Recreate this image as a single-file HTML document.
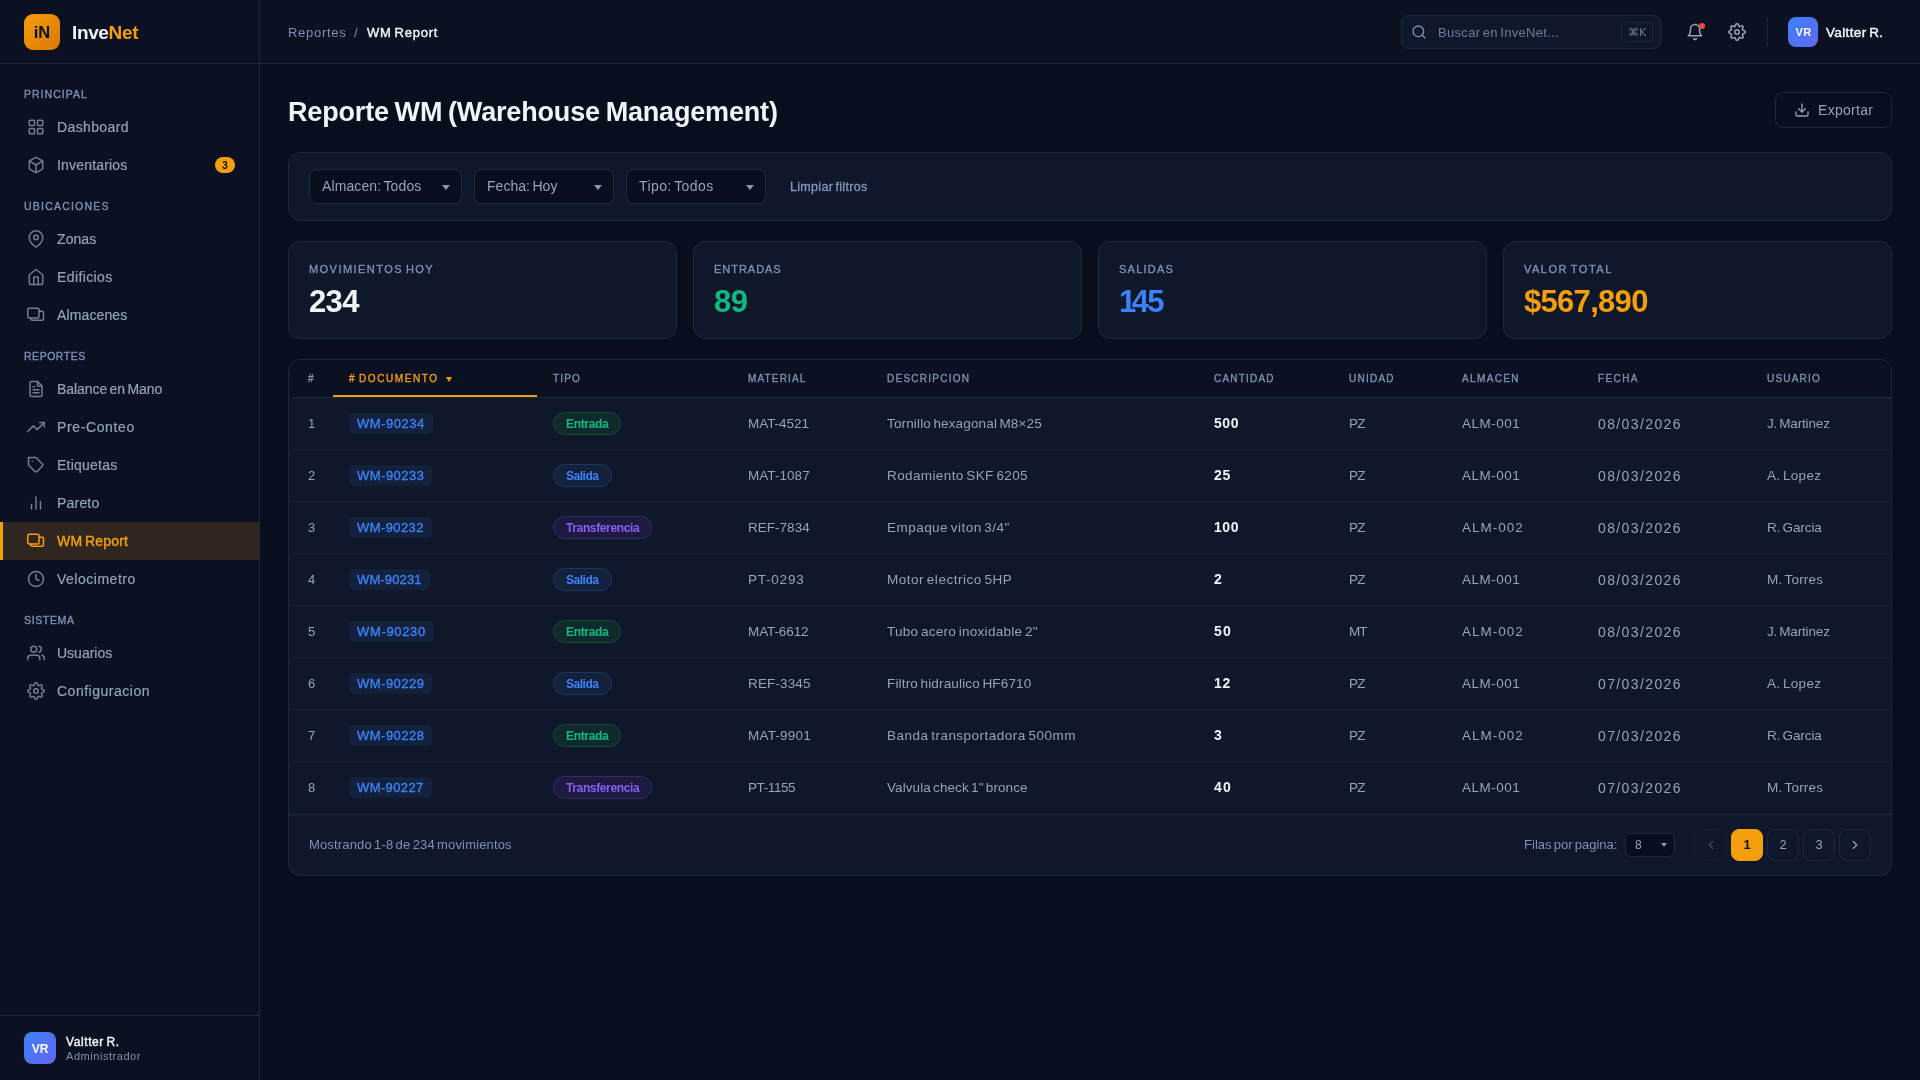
<!DOCTYPE html>
<html lang="es">
<head>
<meta charset="utf-8">
<title>InveNet - WM Report</title>
<style>
*{box-sizing:border-box;margin:0;padding:0}
html,body{width:1920px;height:1080px;overflow:hidden;background:#090e1e;color:#94a3b8;
  font-family:"Liberation Sans",sans-serif;font-size:14px}
svg{display:block}
.ico{fill:none;stroke:currentColor;stroke-width:2;stroke-linecap:round;stroke-linejoin:round}
.fit{white-space:nowrap;word-spacing:-1.5px}
.layer{position:absolute;left:0;top:0;width:1920px;height:1080px;will-change:transform}
.bg-side{position:absolute;left:0;top:0;width:260px;height:1080px;background:#0b1121}
.bg-top{position:absolute;left:260px;top:0;width:1660px;height:64px;background:#0b1121}

/* ---------- sidebar ---------- */
.sidebar{position:absolute;left:0;top:0;width:260px;height:1080px;border-right:1px solid #1e293b}
.brand{height:64px;border-bottom:1px solid #1e293b;position:relative}
.logo{position:absolute;left:24px;top:14px;width:36px;height:36px;border-radius:9px;
  background:linear-gradient(135deg,#f59e0b 0%,#d97706 100%);color:#0b1121;font-weight:700;font-size:16.5px;
  text-align:center;line-height:36px;letter-spacing:0}
.brand-name{position:absolute;left:72px;top:20px;font-size:19px;font-weight:700;color:#f1f5f9;line-height:25px}
.brand-name b{color:#f59e0b}
.nav{padding-top:16px}
.sec{height:28px;padding:8px 24px 0;font-size:10.5px;line-height:12px;font-weight:400;-webkit-text-stroke:.35px #7f8fb5;color:#7f8fb5;white-space:nowrap}
.sec.gap{margin-top:8px}
.item{height:38px;position:relative;color:#94a3b8;-webkit-text-stroke:.2px #94a3b8;font-size:14px;line-height:38px;padding-left:57px;white-space:nowrap}
.item svg{position:absolute;left:27px;top:10px;width:18px;height:18px;color:#6f7d98}
.item.active{background:#2f261f;color:#f59e0b;font-weight:400;-webkit-text-stroke:.4px #f59e0b;border-left:3px solid #f59e0b;padding-left:54px}
.item.active svg{left:24px;color:#f59e0b}
.badge{-webkit-text-stroke:0;position:absolute;left:215px;top:11px;width:20px;height:16px;border-radius:8px;background:#f59e0b;color:#0b1121;
  font-size:10px;font-weight:700;line-height:17.5px;text-align:center;letter-spacing:0}
.item.active .badge{left:212px}
.side-foot{position:absolute;left:0;bottom:0;width:259px;height:65px;border-top:1px solid #1e293b}
.avatar{background:linear-gradient(135deg,#3b82f6 0%,#6366f1 100%);color:#fff;font-weight:700;text-align:center}
.side-foot .avatar{position:absolute;left:24px;top:16px;width:32px;height:32px;border-radius:8px;font-size:12px;line-height:34px}
.side-foot .nm{position:absolute;left:66px;top:19px;font-size:12px;line-height:14px;font-weight:400;-webkit-text-stroke:.4px #f1f5f9;color:#f1f5f9;white-space:nowrap}
.side-foot .rl{position:absolute;left:66px;top:33px;font-size:11px;line-height:14px;color:#7f8fb5}

/* ---------- header ---------- */
.top{position:absolute;left:260px;top:0;width:1660px;height:64px;border-bottom:1px solid #1e293b}
.crumb{position:absolute;left:28px;top:23px;font-size:13px;line-height:20px;color:#7f8fb5;white-space:nowrap}
.crumb i{font-style:normal;position:absolute;left:66px;top:0}
.crumb b{position:absolute;left:79px;top:0;color:#f1f5f9;font-weight:400;-webkit-text-stroke:.4px #f1f5f9}
.search{position:absolute;left:1141px;top:15px;width:260px;height:34px;border:1px solid #1e293b;border-radius:8px;background:#0f172a}
.search svg{position:absolute;left:9px;top:8px;width:16px;height:16px;color:#7f8fb5}
.search .ph{position:absolute;left:36px;top:8px;font-size:13px;line-height:18px;color:#6b7a9d}
.search kbd{position:absolute;right:7px;top:6px;width:32px;height:20px;border:1px solid #1e293b;border-radius:4px;font-family:"DejaVu Sans","Liberation Sans",sans-serif;
  font-size:11px;line-height:19px;text-align:center;color:#6b7a9d}
.hicon{position:absolute;top:23px;width:18px;height:18px;color:#94a3b8}
.dot{position:absolute;left:1439px;top:23px;width:5.5px;height:5.5px;border-radius:50%;background:#ef4444}
.vdiv{position:absolute;left:1507px;top:18px;width:1px;height:28px;background:#1e293b}
.top .avatar{position:absolute;left:1528px;top:17px;width:30px;height:30px;border-radius:8px;font-size:11px;line-height:30px;padding-left:1px;letter-spacing:.3px}
.top .uname{position:absolute;left:1566px;top:23px;font-size:13.5px;line-height:20px;font-weight:400;-webkit-text-stroke:.45px #f1f5f9;color:#f1f5f9;white-space:nowrap}

/* ---------- main ---------- */
.main{position:absolute;left:260px;top:64px;width:1660px;height:1016px}
.title{position:absolute;left:28px;top:31px;font-size:27px;line-height:34px;font-weight:700;color:#f1f5f9;white-space:nowrap}
.export{position:absolute;left:1515px;top:28px;width:117px;height:36px;border:1px solid #1e293b;border-radius:8px;color:#94a3b8;font-size:14px;line-height:34px;padding-left:42px;white-space:nowrap}
.export svg{position:absolute;left:18px;top:9px;width:16px;height:16px;color:#94a3b8}
.card{position:absolute;background:#0f172a;border:1px solid #1e293b;border-radius:12px}
.filters{left:28px;top:88px;width:1604px;height:69px}
.sel{position:absolute;top:16px;height:35px;border:1px solid #1e293b;border-radius:8px;background:#090e1e;color:#94a3b8;font-size:14px;line-height:33px;padding-left:12px;white-space:nowrap}
.sel:after,.rsel:after{content:"";position:absolute;right:11px;top:14.5px;border-left:4px solid transparent;border-right:4px solid transparent;border-top:5.5px solid #8a99bb}
.clear{position:absolute;left:501px;top:26px;font-size:12.5px;line-height:16px;color:#8696be;-webkit-text-stroke:.3px #8696be;white-space:nowrap}
.stat{top:177px;width:389px;height:98px}
.stat .l{position:absolute;left:20px;top:21px;font-size:11px;line-height:12px;font-weight:400;-webkit-text-stroke:.35px #7f8fb5;color:#7f8fb5;white-space:nowrap}
.stat .v{position:absolute;left:20px;top:42px;font-size:31px;line-height:36px;font-weight:700;color:#f1f5f9;white-space:nowrap}
.tbl{left:28px;top:295px;width:1604px;height:517px;overflow:hidden}
.thead{position:absolute;left:0;top:0;width:1602px;height:38px;background:#0b1121}
.thead:after{content:"";position:absolute;left:3px;right:0;bottom:0;height:1px;background:#1e293b}
.th{position:absolute;top:13px;font-size:10px;line-height:12px;font-weight:400;-webkit-text-stroke:.35px #7f8fb5;color:#7f8fb5;white-space:nowrap}
.th.on{color:#f59e0b;-webkit-text-stroke-color:#f59e0b}
.thbar{position:absolute;left:44px;top:35px;z-index:2;width:204px;height:2px;background:#f59e0b}
.tri{position:absolute;left:157px;top:17px;border-left:3px solid transparent;border-right:3px solid transparent;border-top:5px solid #f59e0b}
.row{position:absolute;left:3px;width:1599px;height:52px;border-bottom:1px solid #172033;font-size:13.5px;line-height:20px;color:#94a3b8}
.row>*{position:absolute;top:16px;white-space:nowrap}
.c1{left:16px;font-size:13px}
.doc{left:57px;top:15px!important;height:21px;line-height:22px;padding:0 8px;border-radius:5px;background:#14213d;color:#3b82f6;font-size:13px;font-weight:400;-webkit-text-stroke:.35px #3b82f6}
.pill{left:261px;top:14px!important;height:23px;line-height:23px;padding:0 12px;border-radius:12px;font-size:12px;font-weight:700;border:1px solid}
.pill.e{color:#10b981;background:#0f2a2a;border-color:#14453f}
.pill.s{color:#3b82f6;background:#14213d;border-color:#1c3663}
.pill.t{color:#8b5cf6;background:#1c1b3f;border-color:#332a66}
.c4{left:456px}.c5{left:595px}.c6{left:922px;top:15px!important;color:#f1f5f9;font-weight:700;font-size:14px}.c7{left:1057px}.c8{left:1170px}.c9{left:1306px;top:15.5px!important;font-size:14px}.c10{left:1475px}
.tfoot{position:absolute;left:0;top:454px;width:1602px;height:61px;border-top:1px solid #1e293b}
.tfoot .info{position:absolute;left:20px;top:22px;font-size:13px;line-height:16px;color:#7f8fb5;white-space:nowrap}
.tfoot .rpp{position:absolute;left:1235px;top:22px;font-size:13px;line-height:16px;color:#7f8fb5;white-space:nowrap}
.rsel{position:absolute;left:1336px;top:18px;width:50px;height:24px;border:1px solid #1e293b;border-radius:6px;background:#090e1e;color:#94a3b8;font-size:12px;line-height:22px;padding-left:9px}
.rsel:after{right:7px;top:9px;border-left-width:3px;border-right-width:3px;border-top-width:4px}
.pg{position:absolute;top:14px;width:32px;height:32px;border:1px solid #1e293b;border-radius:8px;color:#94a3b8;font-size:13px;line-height:30px;text-align:center}
.pg.on{background:#f59e0b;border-color:#f59e0b;color:#0b1121;font-weight:700}
.pg.dis{opacity:.4}
.pg svg{position:absolute;left:8px;top:8px;width:14px;height:14px}
</style>
</head>
<body>
<div class="bgs"><div class="bg-side"></div><div class="bg-top"></div></div>
<div class="layer">
<aside class="sidebar">
  <div class="brand"><div class="logo">iN</div><div class="brand-name"><span class="fit" style="letter-spacing:-0.360px">Inve<b>Net</b></span></div></div>
  <nav class="nav">
    <div class="sec"><span class="fit" style="letter-spacing:1.012px">PRINCIPAL</span></div>
    <div class="item"><svg class="ico" viewBox="0 0 24 24"><rect x="3" y="3" width="7" height="7" rx="1"/><rect x="14" y="3" width="7" height="7" rx="1"/><rect x="14" y="14" width="7" height="7" rx="1"/><rect x="3" y="14" width="7" height="7" rx="1"/></svg><span class="fit" style="letter-spacing:0.375px">Dashboard</span></div>
    <div class="item"><svg class="ico" viewBox="0 0 24 24"><path d="M21 16V8a2 2 0 0 0-1-1.73l-7-4a2 2 0 0 0-2 0l-7 4A2 2 0 0 0 3 8v8a2 2 0 0 0 1 1.73l7 4a2 2 0 0 0 2 0l7-4A2 2 0 0 0 21 16z"/><path d="M3.27 6.96 12 12.01l8.73-5.05"/><path d="M12 22.08V12"/></svg><span class="fit" style="letter-spacing:0.176px">Inventarios</span><span class="badge">3</span></div>
    <div class="sec gap"><span class="fit" style="letter-spacing:1.215px">UBICACIONES</span></div>
    <div class="item"><svg class="ico" viewBox="0 0 24 24"><path d="M21 10c0 7-9 13-9 13s-9-6-9-13a9 9 0 0 1 18 0z"/><circle cx="12" cy="10" r="3"/></svg><span class="fit" style="letter-spacing:0.083px">Zonas</span></div>
    <div class="item"><svg class="ico" viewBox="0 0 24 24"><path d="M3 9l9-7 9 7v11a2 2 0 0 1-2 2H5a2 2 0 0 1-2-2z"/><path d="M9 22V12h6v10"/></svg><span class="fit" style="letter-spacing:0.389px">Edificios</span></div>
    <div class="item"><svg class="ico" viewBox="0 0 24 24"><rect x="1" y="3" width="15" height="13" rx="2"/><path d="M16 7h4a2 2 0 0 1 2 2v8a2 2 0 0 1-2 2H7a2 2 0 0 1-2-2l-1-1"/></svg><span class="fit" style="letter-spacing:0.123px">Almacenes</span></div>
    <div class="sec gap"><span class="fit" style="letter-spacing:0.525px">REPORTES</span></div>
    <div class="item"><svg class="ico" viewBox="0 0 24 24"><path d="M14 2H6a2 2 0 0 0-2 2v16a2 2 0 0 0 2 2h12a2 2 0 0 0 2-2V8z"/><path d="M14 2v6h6"/><path d="M16 13H8"/><path d="M16 17H8"/><path d="M10 9H8"/></svg><span class="fit" style="letter-spacing:-0.051px">Balance en Mano</span></div>
    <div class="item"><svg class="ico" viewBox="0 0 24 24"><path d="M23 6l-9.5 9.5-5-5L1 18"/><path d="M17 6h6v6"/></svg><span class="fit" style="letter-spacing:0.628px">Pre-Conteo</span></div>
    <div class="item"><svg class="ico" viewBox="0 0 24 24"><path d="M20.59 13.41l-7.17 7.17a2 2 0 0 1-2.83 0L2 12V2h10l8.59 8.59a2 2 0 0 1 0 2.82z"/><path d="M7 7h.01"/></svg><span class="fit" style="letter-spacing:0.234px">Etiquetas</span></div>
    <div class="item"><svg class="ico" viewBox="0 0 24 24"><path d="M18 20V10"/><path d="M12 20V4"/><path d="M6 20v-6"/></svg><span class="fit" style="letter-spacing:0.199px">Pareto</span></div>
    <div class="item active"><svg class="ico" viewBox="0 0 24 24"><rect x="1" y="3" width="15" height="13" rx="2"/><path d="M16 7h4a2 2 0 0 1 2 2v8a2 2 0 0 1-2 2H7a2 2 0 0 1-2-2l-1-1"/></svg><span class="fit" style="letter-spacing:0.213px">WM Report</span></div>
    <div class="item"><svg class="ico" viewBox="0 0 24 24"><circle cx="12" cy="12" r="10"/><path d="M12 6v6l4 2"/></svg><span class="fit" style="letter-spacing:0.509px">Velocimetro</span></div>
    <div class="sec gap"><span class="fit" style="letter-spacing:0.650px">SISTEMA</span></div>
    <div class="item"><svg class="ico" viewBox="0 0 24 24"><path d="M17 21v-2a4 4 0 0 0-4-4H5a4 4 0 0 0-4 4v2"/><circle cx="9" cy="7" r="4"/><path d="M23 21v-2a4 4 0 0 0-3-3.87"/><path d="M16 3.13a4 4 0 0 1 0 7.75"/></svg><span class="fit" style="letter-spacing:0.000px">Usuarios</span></div>
    <div class="item"><svg class="ico" viewBox="0 0 24 24"><circle cx="12" cy="12" r="3"/><path d="M19.4 15a1.65 1.65 0 0 0 .33 1.82l.06.06a2 2 0 0 1 0 2.83 2 2 0 0 1-2.83 0l-.06-.06a1.65 1.65 0 0 0-1.82-.33 1.65 1.65 0 0 0-1 1.51V21a2 2 0 0 1-2 2 2 2 0 0 1-2-2v-.09A1.65 1.65 0 0 0 9 19.4a1.65 1.65 0 0 0-1.82.33l-.06.06a2 2 0 0 1-2.83 0 2 2 0 0 1 0-2.83l.06-.06a1.65 1.65 0 0 0 .33-1.82 1.65 1.65 0 0 0-1.51-1H3a2 2 0 0 1-2-2 2 2 0 0 1 2-2h.09A1.65 1.65 0 0 0 4.6 9a1.65 1.65 0 0 0-.33-1.82l-.06-.06a2 2 0 0 1 0-2.83 2 2 0 0 1 2.83 0l.06.06a1.65 1.65 0 0 0 1.82.33H9a1.65 1.65 0 0 0 1-1.51V3a2 2 0 0 1 2-2 2 2 0 0 1 2 2v.09a1.65 1.65 0 0 0 1 1.51 1.65 1.65 0 0 0 1.82-.33l.06-.06a2 2 0 0 1 2.83 0 2 2 0 0 1 0 2.83l-.06.06a1.65 1.65 0 0 0-.33 1.82V9a1.65 1.65 0 0 0 1.51 1H21a2 2 0 0 1 2 2 2 2 0 0 1-2 2h-.09a1.65 1.65 0 0 0-1.51 1z"/></svg><span class="fit" style="letter-spacing:0.509px">Configuracion</span></div>
  </nav>
  <div class="side-foot"><div class="avatar">VR</div><div class="nm"><span class="fit" style="letter-spacing:0.596px">Valtter R.</span></div><div class="rl"><span class="fit" style="letter-spacing:0.545px">Administrador</span></div></div>
</aside>

<header class="top">
  <div class="crumb"><span class="fit" style="letter-spacing:0.714px">Reportes</span><i>/</i><b><span class="fit" style="letter-spacing:0.770px">WM Report</span></b></div>
  <div class="search"><svg class="ico" viewBox="0 0 24 24"><circle cx="11" cy="11" r="8"/><path d="M21 21l-4.35-4.35"/></svg><span class="ph"><span class="fit" style="letter-spacing:0.311px">Buscar en InveNet...</span></span><kbd>⌘K</kbd></div>
  <svg class="ico hicon" style="left:1426px" viewBox="0 0 24 24"><path d="M18 8A6 6 0 0 0 6 8c0 7-3 9-3 9h18s-3-2-3-9"/><path d="M13.73 21a2 2 0 0 1-3.46 0"/></svg>
  <div class="dot"></div>
  <svg class="ico hicon" style="left:1468px" viewBox="0 0 24 24"><circle cx="12" cy="12" r="3"/><path d="M19.4 15a1.65 1.65 0 0 0 .33 1.82l.06.06a2 2 0 0 1 0 2.83 2 2 0 0 1-2.83 0l-.06-.06a1.65 1.65 0 0 0-1.82-.33 1.65 1.65 0 0 0-1 1.51V21a2 2 0 0 1-2 2 2 2 0 0 1-2-2v-.09A1.65 1.65 0 0 0 9 19.4a1.65 1.65 0 0 0-1.82.33l-.06.06a2 2 0 0 1-2.83 0 2 2 0 0 1 0-2.83l.06-.06a1.65 1.65 0 0 0 .33-1.82 1.65 1.65 0 0 0-1.51-1H3a2 2 0 0 1-2-2 2 2 0 0 1 2-2h.09A1.65 1.65 0 0 0 4.6 9a1.65 1.65 0 0 0-.33-1.82l-.06-.06a2 2 0 0 1 0-2.83 2 2 0 0 1 2.83 0l.06.06a1.65 1.65 0 0 0 1.82.33H9a1.65 1.65 0 0 0 1-1.51V3a2 2 0 0 1 2-2 2 2 0 0 1 2 2v.09a1.65 1.65 0 0 0 1 1.51 1.65 1.65 0 0 0 1.82-.33l.06-.06a2 2 0 0 1 2.83 0 2 2 0 0 1 0 2.83l-.06.06a1.65 1.65 0 0 0-.33 1.82V9a1.65 1.65 0 0 0 1.51 1H21a2 2 0 0 1 2 2 2 2 0 0 1-2 2h-.09a1.65 1.65 0 0 0-1.51 1z"/></svg>
  <div class="vdiv"></div>
  <div class="avatar">VR</div><div class="uname"><span class="fit" style="letter-spacing:0.358px">Valtter R.</span></div>
</header>

<main class="main">
  <h1 class="title"><span class="fit" style="letter-spacing:-0.176px">Reporte WM (Warehouse Management)</span></h1>
  <div class="export"><svg class="ico" viewBox="0 0 24 24"><path d="M21 15v4a2 2 0 0 1-2 2H5a2 2 0 0 1-2-2v-4"/><path d="M7 10l5 5 5-5"/><path d="M12 15V3"/></svg><span class="fit" style="letter-spacing:0.297px">Exportar</span></div>

  <div class="card filters">
    <div class="sel" style="left:20px;width:153px"><span class="fit" style="letter-spacing:0.110px">Almacen: Todos</span></div>
    <div class="sel" style="left:185px;width:140px"><span class="fit" style="letter-spacing:0.034px">Fecha: Hoy</span></div>
    <div class="sel" style="left:337px;width:140px"><span class="fit" style="letter-spacing:0.409px">Tipo: Todos</span></div>
    <div class="clear"><span class="fit" style="letter-spacing:0.312px">Limpiar filtros</span></div>
  </div>

  <div class="card stat" style="left:28px"><div class="l"><span class="fit" style="letter-spacing:1.449px">MOVIMIENTOS HOY</span></div><div class="v"><span class="fit" style="letter-spacing:-0.661px">234</span></div></div>
  <div class="card stat" style="left:433px"><div class="l"><span class="fit" style="letter-spacing:0.971px">ENTRADAS</span></div><div class="v" style="color:#10b981"><span class="fit" style="letter-spacing:-0.484px">89</span></div></div>
  <div class="card stat" style="left:838px"><div class="l"><span class="fit" style="letter-spacing:1.238px">SALIDAS</span></div><div class="v" style="color:#3b82f6"><span class="fit" style="letter-spacing:-1.641px"><span style="letter-spacing:-4.5px">1</span>45</span></div></div>
  <div class="card stat" style="left:1243px"><div class="l"><span class="fit" style="letter-spacing:1.503px">VALOR TOTAL</span></div><div class="v" style="color:#f59e0b"><span class="fit" style="letter-spacing:-0.700px">$567,890</span></div></div>

  <div class="card tbl">
    <div class="thead">
      <div class="th" style="left:19px"><span class="fit" style="letter-spacing:0.000px">#</span></div><div class="th" style="left:264px"><span class="fit" style="letter-spacing:1.137px">TIPO</span></div><div class="th" style="left:459px"><span class="fit" style="letter-spacing:1.161px">MATERIAL</span></div><div class="th" style="left:598px"><span class="fit" style="letter-spacing:1.264px">DESCRIPCION</span></div><div class="th" style="left:925px"><span class="fit" style="letter-spacing:1.197px">CANTIDAD</span></div><div class="th" style="left:1060px"><span class="fit" style="letter-spacing:1.233px">UNIDAD</span></div><div class="th" style="left:1173px"><span class="fit" style="letter-spacing:1.359px">ALMACEN</span></div><div class="th" style="left:1309px"><span class="fit" style="letter-spacing:1.375px">FECHA</span></div><div class="th" style="left:1478px"><span class="fit" style="letter-spacing:1.188px">USUARIO</span></div>
      <div class="th on" style="left:60px"><span class="fit" style="letter-spacing:1.578px"># DOCUMENTO</span></div><div class="tri"></div><div class="thbar"></div>
    </div>
    <div class="row" style="top:38px"><span class="c1">1</span><span class="doc"><span class="fit" style="letter-spacing:0.523px">WM-90234</span></span><span class="pill e"><span class="fit" style="letter-spacing:-0.322px">Entrada</span></span><span class="c4"><span class="fit" style="letter-spacing:-0.055px">MAT-4521</span></span><span class="c5"><span class="fit" style="letter-spacing:0.151px">Tornillo hexagonal M8×25</span></span><span class="c6"><span class="fit" style="letter-spacing:0.569px">500</span></span><span class="c7"><span class="fit" style="letter-spacing:-0.853px">PZ</span></span><span class="c8"><span class="fit" style="letter-spacing:0.501px">ALM-001</span></span><span class="c9"><span class="fit" style="letter-spacing:1.381px">08/03/2026</span></span><span class="c10"><span class="fit" style="letter-spacing:-0.163px">J. Martinez</span></span></div>
    <div class="row" style="top:90px"><span class="c1">2</span><span class="doc"><span class="fit" style="letter-spacing:0.487px">WM-90233</span></span><span class="pill s"><span class="fit" style="letter-spacing:-0.471px">Salida</span></span><span class="c4"><span class="fit" style="letter-spacing:0.059px">MAT-1087</span></span><span class="c5"><span class="fit" style="letter-spacing:0.389px">Rodamiento SKF 6205</span></span><span class="c6"><span class="fit" style="letter-spacing:0.819px">25</span></span><span class="c7"><span class="fit" style="letter-spacing:-0.853px">PZ</span></span><span class="c8"><span class="fit" style="letter-spacing:0.501px">ALM-001</span></span><span class="c9"><span class="fit" style="letter-spacing:1.381px">08/03/2026</span></span><span class="c10"><span class="fit" style="letter-spacing:0.315px">A. Lopez</span></span></div>
    <div class="row" style="top:142px"><span class="c1">3</span><span class="doc"><span class="fit" style="letter-spacing:0.417px">WM-90232</span></span><span class="pill t"><span class="fit" style="letter-spacing:-0.370px">Transferencia</span></span><span class="c4"><span class="fit" style="letter-spacing:0.023px">REF-7834</span></span><span class="c5"><span class="fit" style="letter-spacing:0.466px">Empaque viton 3/4"</span></span><span class="c6"><span class="fit" style="letter-spacing:0.569px">100</span></span><span class="c7"><span class="fit" style="letter-spacing:-0.853px">PZ</span></span><span class="c8"><span class="fit" style="letter-spacing:1.001px">ALM-002</span></span><span class="c9"><span class="fit" style="letter-spacing:1.381px">08/03/2026</span></span><span class="c10"><span class="fit" style="letter-spacing:-0.090px">R. Garcia</span></span></div>
    <div class="row" style="top:194px"><span class="c1">4</span><span class="doc"><span class="fit" style="letter-spacing:0.130px">WM-90231</span></span><span class="pill s"><span class="fit" style="letter-spacing:-0.471px">Salida</span></span><span class="c4"><span class="fit" style="letter-spacing:0.776px">PT-0293</span></span><span class="c5"><span class="fit" style="letter-spacing:0.514px">Motor electrico 5HP</span></span><span class="c6"><span class="fit" style="letter-spacing:0.000px">2</span></span><span class="c7"><span class="fit" style="letter-spacing:-0.853px">PZ</span></span><span class="c8"><span class="fit" style="letter-spacing:0.501px">ALM-001</span></span><span class="c9"><span class="fit" style="letter-spacing:1.381px">08/03/2026</span></span><span class="c10"><span class="fit" style="letter-spacing:0.185px">M. Torres</span></span></div>
    <div class="row" style="top:246px"><span class="c1">5</span><span class="doc"><span class="fit" style="letter-spacing:0.667px">WM-90230</span></span><span class="pill e"><span class="fit" style="letter-spacing:-0.322px">Entrada</span></span><span class="c4"><span class="fit" style="letter-spacing:-0.098px">MAT-6612</span></span><span class="c5"><span class="fit" style="letter-spacing:0.287px">Tubo acero inoxidable 2"</span></span><span class="c6"><span class="fit" style="letter-spacing:1.125px">50</span></span><span class="c7"><span class="fit" style="letter-spacing:-1.000px">MT</span></span><span class="c8"><span class="fit" style="letter-spacing:1.001px">ALM-002</span></span><span class="c9"><span class="fit" style="letter-spacing:1.381px">08/03/2026</span></span><span class="c10"><span class="fit" style="letter-spacing:-0.163px">J. Martinez</span></span></div>
    <div class="row" style="top:298px"><span class="c1">6</span><span class="doc"><span class="fit" style="letter-spacing:0.487px">WM-90229</span></span><span class="pill s"><span class="fit" style="letter-spacing:-0.471px">Salida</span></span><span class="c4"><span class="fit" style="letter-spacing:0.139px">REF-3345</span></span><span class="c5"><span class="fit" style="letter-spacing:0.173px">Filtro hidraulico HF6710</span></span><span class="c6"><span class="fit" style="letter-spacing:0.819px">12</span></span><span class="c7"><span class="fit" style="letter-spacing:-0.853px">PZ</span></span><span class="c8"><span class="fit" style="letter-spacing:0.501px">ALM-001</span></span><span class="c9"><span class="fit" style="letter-spacing:1.381px">07/03/2026</span></span><span class="c10"><span class="fit" style="letter-spacing:0.315px">A. Lopez</span></span></div>
    <div class="row" style="top:350px"><span class="c1">7</span><span class="doc"><span class="fit" style="letter-spacing:0.487px">WM-90228</span></span><span class="pill e"><span class="fit" style="letter-spacing:-0.322px">Entrada</span></span><span class="c4"><span class="fit" style="letter-spacing:0.210px">MAT-9901</span></span><span class="c5"><span class="fit" style="letter-spacing:0.482px">Banda transportadora 500mm</span></span><span class="c6"><span class="fit" style="letter-spacing:0.000px">3</span></span><span class="c7"><span class="fit" style="letter-spacing:-0.853px">PZ</span></span><span class="c8"><span class="fit" style="letter-spacing:1.001px">ALM-002</span></span><span class="c9"><span class="fit" style="letter-spacing:1.381px">07/03/2026</span></span><span class="c10"><span class="fit" style="letter-spacing:-0.090px">R. Garcia</span></span></div>
    <div class="row" style="top:402px;border-bottom:0"><span class="c1">8</span><span class="doc"><span class="fit" style="letter-spacing:0.387px">WM-90227</span></span><span class="pill t"><span class="fit" style="letter-spacing:-0.370px">Transferencia</span></span><span class="c4"><span class="fit" style="letter-spacing:-0.408px">PT-1155</span></span><span class="c5"><span class="fit" style="letter-spacing:0.074px">Valvula check 1" bronce</span></span><span class="c6"><span class="fit" style="letter-spacing:1.125px">40</span></span><span class="c7"><span class="fit" style="letter-spacing:-0.853px">PZ</span></span><span class="c8"><span class="fit" style="letter-spacing:0.501px">ALM-001</span></span><span class="c9"><span class="fit" style="letter-spacing:1.381px">07/03/2026</span></span><span class="c10"><span class="fit" style="letter-spacing:0.185px">M. Torres</span></span></div>
    <div class="tfoot">
      <div class="info"><span class="fit" style="letter-spacing:0.156px">Mostrando 1-8 de 234 movimientos</span></div>
      <div class="rpp"><span class="fit" style="letter-spacing:0.023px">Filas por pagina:</span></div>
      <div class="rsel">8</div>
      <div class="pg dis" style="left:1406px"><svg class="ico" viewBox="0 0 24 24"><path d="M15 18l-6-6 6-6"/></svg></div>
      <div class="pg on" style="left:1442px">1</div>
      <div class="pg" style="left:1478px">2</div>
      <div class="pg" style="left:1514px">3</div>
      <div class="pg" style="left:1550px"><svg class="ico" viewBox="0 0 24 24"><path d="M9 18l6-6-6-6"/></svg></div>
    </div>
  </div>
</main>
</div>
</body>
</html>
